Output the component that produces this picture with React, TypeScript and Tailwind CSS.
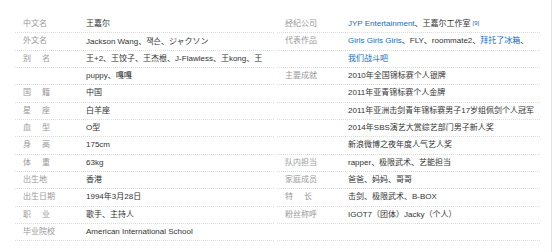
import React from "react";

type Cell = { label?: React.ReactNode; value?: React.ReactNode };

const Spaced = ({ a, b }: { a: string; b: string }) => (
  <span className="flex">
    <span>{a}</span>
    <span className="ml-[11px]">{b}</span>
  </span>
);

const Link = ({ children }: { children: React.ReactNode }) => (
  <span className="text-[#136ec2]">{children}</span>
);

const left: Cell[] = [
  { label: "中文名", value: "王嘉尔" },
  {
    label: "外文名",
    value: (
      <>
        Jackson Wang、<span style={{ fontFamily: '"Noto Sans CJK KR", sans-serif' }}>잭슨</span>、
        <span style={{ fontFamily: '"Noto Sans CJK JP", sans-serif' }}>ジャクソン</span>
      </>
    ),
  },
  { label: <Spaced a="别" b="名" />, value: "王+2、王饺子、王杰根、J-Flawless、王kong、王" },
  { value: "puppy、嘎嘎" },
  { label: <Spaced a="国" b="籍" />, value: "中国" },
  { label: <Spaced a="星" b="座" />, value: "白羊座" },
  { label: <Spaced a="血" b="型" />, value: "O型" },
  { label: <Spaced a="身" b="高" />, value: "175cm" },
  { label: <Spaced a="体" b="重" />, value: "63kg" },
  { label: "出生地", value: "香港" },
  { label: "出生日期", value: "1994年3月28日" },
  { label: <Spaced a="职" b="业" />, value: "歌手、主持人" },
  { label: "毕业院校", value: "American International School" },
];

const right: Cell[] = [
  {
    label: "经纪公司",
    value: (
      <>
        <Link>JYP Entertainment</Link>、王嘉尔工作室
        <sup className="text-[#136ec2] text-[6px] ml-[2px] relative top-[-1px]">[9]</sup>
      </>
    ),
  },
  {
    label: "代表作品",
    value: (
      <>
        <Link>Girls Girls Girls</Link>、FLY、roommate2、<Link>拜托了冰箱</Link>、
      </>
    ),
  },
  { value: <Link>我们战斗吧</Link> },
  { label: "主要成就", value: "2010年全国锦标赛个人银牌" },
  { value: "2011年亚青锦标赛个人金牌" },
  { value: "2011年亚洲击剑青年锦标赛男子17岁组佩剑个人冠军" },
  { value: "2014年SBS演艺大赏综艺部门男子新人奖" },
  { value: "新浪微博之夜年度人气艺人奖" },
  { label: "队内担当", value: "rapper、极限武术、艺能担当" },
  { label: "家庭成员", value: "爸爸、妈妈、哥哥" },
  { label: <Spaced a="特" b="长" />, value: "击剑、极限武术、B-BOX" },
  { label: "粉丝称呼", value: "IGOT7（团体）Jacky（个人）" },
  {},
];

const Column = ({ rows, w }: { rows: Cell[]; w: string }) => (
  <div className={`flex flex-col ${w}`}>
    {rows.map((r, i) => (
      <div
        key={i}
        className="h-[17.33px] flex items-center border-b border-dotted border-[#dcdcdc] whitespace-nowrap"
      >
        <div className="w-[71px] shrink-0 pl-[8px] text-[#999999]">{r.label}</div>
        <div className="text-[#333333]">{r.value}</div>
      </div>
    ))}
  </div>
);

export default function App() {
  return (
    <div
      className="w-[554px] h-[252px] bg-white overflow-hidden text-[8px] leading-none"
      style={{ fontFamily: '"Liberation Sans", Arial, "Noto Sans CJK SC", sans-serif' }}
    >
      <div className="w-[552px] h-[252px] border-r border-[#e3e3e3] pt-[16px] pl-[15px] flex gap-[3px]">
        <Column rows={left} w="w-[259px]" />
        <Column rows={right} w="w-[263px]" />
      </div>
    </div>
  );
}
